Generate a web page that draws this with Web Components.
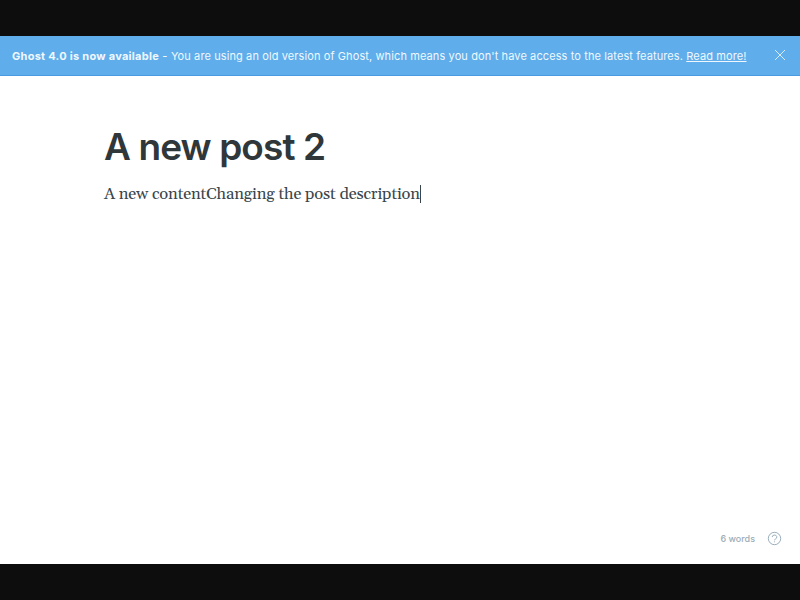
<!DOCTYPE html>
<html lang="en"><head><meta charset="utf-8"><title>Editor</title>
<style>html,body{margin:0;background:#fff}</style></head><body>
<editor-screen>
<update-banner><b slot="title">Ghost 4.0 is now available</b><span>You are using an old version of Ghost, which means you don't have access to the latest features.</span><a slot="link">Read more!</a></update-banner>
<post-editor><span slot="title">A new post 2</span><span>A new contentChanging the post description</span></post-editor>
<editor-status>6 words</editor-status>
</editor-screen>
<script>
const define=(name,html)=>customElements.define(name,class extends HTMLElement{
 constructor(){super();this.attachShadow({mode:'open'}).innerHTML=html}});
define('editor-screen',`<style>:host{display:flex;flex-direction:column;box-sizing:border-box;height:600px;width:800px;border:solid #0d0d0d;border-width:36px 0;background:#fff;overflow:hidden}</style><slot></slot>`);
define('update-banner',`<style>:host{display:flex;align-items:center;justify-content:space-between;box-sizing:border-box;height:40px;flex:none;padding:0 14px 0 12px;background:#5fadea;border-bottom:1px solid #489be0;color:#f0f8fe;font:400 11px/16px Inter,sans-serif}
p{margin:0;white-space:nowrap;letter-spacing:.105px}::slotted(b){font-weight:700;letter-spacing:.265px}i{font-style:normal;font-weight:500;letter-spacing:.3px}::slotted(a){text-decoration:underline}svg{width:12px;height:12px;display:block;margin-bottom:1px}</style><p><slot name="title"></slot><i> - </i><slot></slot> <slot name="link"></slot></p><svg viewBox="0 0 12 12" fill="none" stroke="#e4f2fd" stroke-width=".9"><path d="M1 1 11 11M11 1 1 11"/></svg>`);
define('post-editor',`<style>:host{display:block;flex:1;padding:46px 104px 0}
h1{margin:0;font:600 37px/50px Inter,sans-serif;letter-spacing:-.9px;color:#2f373b}
p{margin:10px 0 0;display:flex;align-items:center;height:24px;font:400 16.5px/24px Gelasio,Georgia,"Liberation Serif",serif;letter-spacing:-.155px;color:#3a464c;white-space:nowrap}::slotted(span:not([slot])){padding-top:2px}i{width:1px;height:18px;background:#3a464c}</style><h1><slot name="title"></slot></h1><p><slot></slot><i></i></p>`);
define('editor-status',`<style>:host{display:flex;align-items:center;justify-content:flex-end;gap:12px;padding:0 18px 18px 0;font:500 9px/14px Inter,sans-serif;letter-spacing:0;color:#9bacb8}svg{width:15px;height:15px;display:block}</style><span><slot></slot></span><svg viewBox="0 0 15 15" fill="none" stroke="#8fa5b3" stroke-width=".9"><circle cx="7.5" cy="7.5" r="6.2"/><path d="M5.2 6.1a2.3 2.1 0 1 1 3.3 1.9q-1 .4-1 1.3"/><circle cx="7.5" cy="10.9" r=".2"/></svg>`);
</script></body></html>
